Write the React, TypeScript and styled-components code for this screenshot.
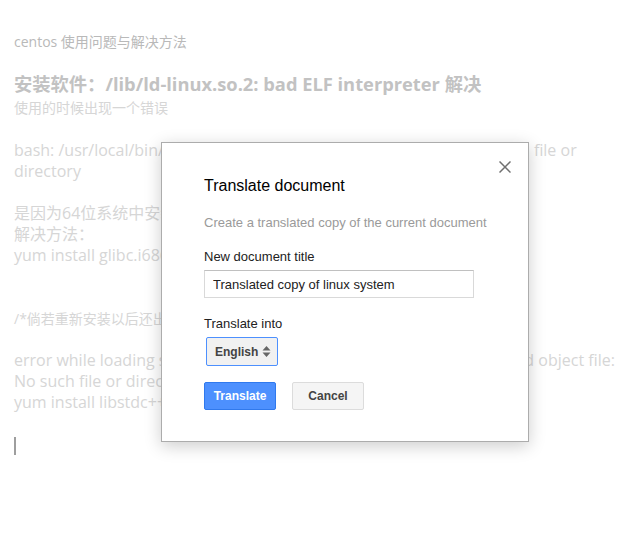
import React from 'react';
import styled, {createGlobalStyle} from 'styled-components';

const GlobalStyle = createGlobalStyle`
  html, body {
    margin: 0;
    padding: 0;
    background: #fff;
  }
  body {
    font-family: "Open Sans", "Noto Sans CJK SC", sans-serif;
  }
`;

const Page = styled.div`
  position: relative;
  width: 637px;
  height: 534px;
  overflow: hidden;
  background: #fff;
`;

const Doc = styled.div`
  padding: 32px 14px 0 14px;
  display: flex;
  flex-direction: column;
`;

const Crumb = styled.div`
  font-size: 14px;
  line-height: 19px;
  color: #b9b9b9;
  margin-bottom: 20px;
`;

const Heading = styled.div`
  font-size: 18.3px;
  line-height: 26px;
  font-weight: bold;
  color: #c2c2c2;
  white-space: nowrap;
`;

const Line = styled.div<{ $size?: number; $h?: number }>`
  font-size: ${p => p.$size ?? 16}px;
  line-height: ${p => p.$h ?? 21}px;
  height: ${p => p.$h ?? 21}px;
  color: #d6d6d6;
  white-space: nowrap;
`;

const Cursor = styled.div`
  width: 2px;
  height: 18px;
  margin-top: 3px;
  background: #9e9e9e;
`;

const Dialog = styled.div`
  position: absolute;
  left: 161px;
  top: 142px;
  width: 324px;
  height: 265px;
  padding: 33px 0 0 42px;
  background: #fff;
  border: 1px solid #acacac;
  box-shadow: 0 4px 16px rgba(0, 0, 0, 0.2);
  font-family: "Liberation Sans", Arial, sans-serif;
  display: flex;
  flex-direction: column;
  align-items: flex-start;
`;

const Close = styled.button`
  position: absolute;
  right: 17px;
  top: 18px;
  width: 12px;
  height: 12px;
  padding: 0;
  border: none;
  background: none;
  display: flex;
  cursor: pointer;
`;

const Title = styled.div`
  font-size: 16px;
  line-height: 20px;
  color: #000;
`;

const Hint = styled.div`
  margin-top: 19px;
  font-size: 13px;
  line-height: 16px;
  color: #9a9a9a;
`;

const Label = styled.div<{ $gap: number }>`
  margin-top: ${p => p.$gap}px;
  font-size: 13px;
  line-height: 16px;
  color: #222;
`;

const Input = styled.input`
  box-sizing: border-box;
  margin-top: 5px;
  width: 270px;
  height: 28px;
  padding: 0 8px;
  border: 1px solid #d9d9d9;
  border-top-color: #c0c0c0;
  font-family: "Liberation Sans", Arial, sans-serif;
  font-size: 13px;
  color: #222;
  outline: none;
`;

const Select = styled.div`
  box-sizing: border-box;
  margin: 5px 0 0 2px;
  width: 72px;
  height: 29px;
  padding: 0 6px 0 8px;
  display: flex;
  align-items: center;
  justify-content: space-between;
  background: #f1f1f1;
  border: 1px solid #4d90fe;
  border-radius: 2px;
  font-size: 12px;
  font-weight: bold;
  color: #444;
`;

const Buttons = styled.div`
  margin-top: 16px;
  display: flex;
  gap: 16px;
`;

const Button = styled.button<{ $primary?: boolean }>`
  box-sizing: border-box;
  width: 72px;
  height: 28px;
  padding: 0;
  border-radius: 2px;
  border: 1px solid ${p => (p.$primary ? '#3079ed' : '#dcdcdc')};
  background: ${p => (p.$primary ? '#4d90fe' : '#f5f5f5')};
  color: ${p => (p.$primary ? '#fff' : '#444')};
  font-family: "Liberation Sans", Arial, sans-serif;
  font-size: 12px;
  font-weight: bold;
  cursor: pointer;
`;

export default function App() {
    return (
        <Page>
            <GlobalStyle/>
            <Doc>
                <Crumb>centos 使用问题与解决方法</Crumb>
                <Heading>安装软件：/lib/ld-linux.so.2: bad ELF interpreter 解决</Heading>
                <Line $size={14} $h={22}>使用的时候出现一个错误</Line>
                <Line/>
                <Line>bash: /usr/local/bin/xx: /lib/ld-linux.so.2: bad ELF interpreter: No such file or</Line>
                <Line>directory</Line>
                <Line/>
                <Line>是因为64位系统中安装了32位程序</Line>
                <Line>解决方法：</Line>
                <Line>yum install glibc.i686</Line>
                <Line/>
                <Line/>
                <Line $size={14}>/*倘若重新安装以后还出现下面的错误*/</Line>
                <Line/>
                <Line>error while loading shared libraries: libstdc+.so.6: cannot open shared object file:</Line>
                <Line>No such file or directory</Line>
                <Line>yum install libstdc++.i686</Line>
                <Line/>
                <Cursor/>
            </Doc>

            <Dialog>
                <Close aria-label="Close">
                    <svg width="12" height="12" viewBox="0 0 12 12">
                        <path d="M0.5 0.5 L11.5 11.5 M11.5 0.5 L0.5 11.5" stroke="#707070" strokeWidth="1.5" fill="none"/>
                    </svg>
                </Close>
                <Title>Translate document</Title>
                <Hint>Create a translated copy of the current document</Hint>
                <Label $gap={18}>New document title</Label>
                <Input defaultValue="Translated copy of linux system"/>
                <Label $gap={18}>Translate into</Label>
                <Select>
                    English
                    <svg width="9" height="13" viewBox="0 0 9 13">
                        <path d="M0.5 5.5 L4.5 1 L8.5 5.5 Z M0.5 7.5 L4.5 12 L8.5 7.5 Z" fill="#666"/>
                    </svg>
                </Select>
                <Buttons>
                    <Button $primary>Translate</Button>
                    <Button>Cancel</Button>
                </Buttons>
            </Dialog>
        </Page>
    );
}
